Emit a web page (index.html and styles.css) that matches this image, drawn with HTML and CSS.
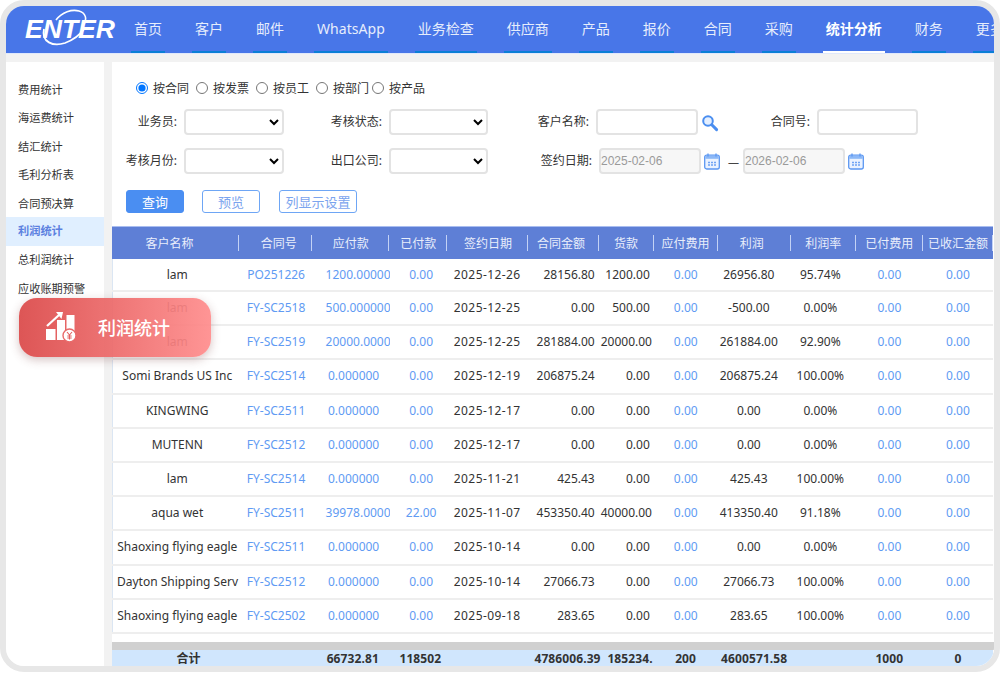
FILE: index.html
```html
<!DOCTYPE html>
<html lang="zh-CN">
<head>
    <meta charset="UTF-8">
    <title>利润统计</title>
    <link rel="stylesheet" href="styles.css">
</head>
<body>
<div class="frame">
    <div class="topbar">
        <svg class="logo" width="100" height="40" viewBox="0 0 100 40">
            <text x="0" y="29" class="logo-text" textLength="90" lengthAdjust="spacingAndGlyphs">ENTER</text>
            <path d="M31 11 C37 3 47 0 54 2 C61 4 62 10 59 15" fill="none" stroke="#fff" stroke-width="1.6"/>
            <path d="M19 20 C16 33 28 38 40 34 C48 31 55 26 60 19" fill="none" stroke="#fff" stroke-width="1.8"/>
        </svg>
        <nav class="tabs">
            <a>首页</a>
            <a>客户</a>
            <a>邮件</a>
            <a class="latin">WhatsApp</a>
            <a>业务检查</a>
            <a>供应商</a>
            <a>产品</a>
            <a>报价</a>
            <a>合同</a>
            <a>采购</a>
            <a class="active">统计分析</a>
            <a>财务</a>
            <a>更多</a>
        </nav>
    </div>

    <div class="content">
        <ul class="side">
            <li>费用统计</li>
            <li>海运费统计</li>
            <li>结汇统计</li>
            <li>毛利分析表</li>
            <li>合同预决算</li>
            <li class="active">利润统计</li>
            <li>总利润统计</li>
            <li>应收账期预警</li>
        </ul>

        <div class="main">
            <form class="filters">
                <div class="radios">
                    <label><input type="radio" name="by" checked>按合同</label>
                    <label><input type="radio" name="by">按发票</label>
                    <label><input type="radio" name="by">按员工</label>
                    <label><input type="radio" name="by">按部门</label>
                    <label class="tight"><input type="radio" name="by">按产品</label>
                </div>

                <div class="row">
                    <label class="lb-a">业务员:</label>
                    <select class="sel"></select>
                    <label class="lb-b">考核状态:</label>
                    <select class="sel sel-b"></select>
                    <label class="lb-c">客户名称:</label>
                    <input class="txt name" type="text">
                    <svg class="ico-search" width="18" height="18" viewBox="0 0 18 18">
                        <circle cx="7" cy="7" r="4.8" fill="#e4efff" stroke="#4a8ef0" stroke-width="2"/>
                        <path d="M10.8 10.8 L15.6 15.6" stroke="#4a8ef0" stroke-width="3" stroke-linecap="round"/>
                    </svg>
                    <label class="lb-d">合同号:</label>
                    <input class="txt" type="text">
                </div>

                <div class="row">
                    <label class="lb-a">考核月份:</label>
                    <select class="sel"></select>
                    <label class="lb-b">出口公司:</label>
                    <select class="sel sel-b"></select>
                    <label class="lb-e">签约日期:</label>
                    <input class="txt date" type="text" value="2025-02-06" disabled>
                    <svg class="ico-cal" width="16" height="17" viewBox="0 0 16 17">
                        <rect x="0.7" y="2.2" width="14.6" height="13.8" rx="2" fill="#eaf2ff" stroke="#5b97f2" stroke-width="1.3"/>
                        <rect x="1.3" y="2.8" width="13.4" height="3" fill="#8cb8f7"/>
                        <path d="M4 0.5 V3.5 M12 0.5 V3.5" stroke="#5b97f2" stroke-width="1.3"/>
                        <path d="M4 9.5 H12 M4 12 H12" stroke="#6fa3f4" stroke-width="1.4" stroke-dasharray="2 1"/>
                    </svg>
                    <span class="dash">—</span>
                    <input class="txt date" type="text" value="2026-02-06" disabled>
                    <svg class="ico-cal" width="16" height="17" viewBox="0 0 16 17">
                        <rect x="0.7" y="2.2" width="14.6" height="13.8" rx="2" fill="#eaf2ff" stroke="#5b97f2" stroke-width="1.3"/>
                        <rect x="1.3" y="2.8" width="13.4" height="3" fill="#8cb8f7"/>
                        <path d="M4 0.5 V3.5 M12 0.5 V3.5" stroke="#5b97f2" stroke-width="1.3"/>
                        <path d="M4 9.5 H12 M4 12 H12" stroke="#6fa3f4" stroke-width="1.4" stroke-dasharray="2 1"/>
                    </svg>
                </div>

                <div class="buttons">
                    <button type="button" class="btn primary">查询</button>
                    <button type="button" class="btn">预览</button>
                    <button type="button" class="btn wide">列显示设置</button>
                </div>
            </form>

            <table class="grid head">
                <colgroup><col class="c1"><col class="c2"><col class="c3"><col class="c4"><col class="c5"><col class="c6"><col class="c7"><col class="c8"><col class="c9"><col class="c10"><col class="c11"><col class="c12"></colgroup>
                <tr>
                    <th>客户名称</th><th>合同号</th><th>应付款</th><th>已付款</th><th>签约日期</th><th>合同金额</th><th>货款</th><th>应付费用</th><th>利润</th><th>利润率</th><th>已付费用</th><th>已收汇金额</th>
                </tr>
            </table>

            <table class="grid body">
                <colgroup><col class="c1"><col class="c2"><col class="c3"><col class="c4"><col class="c5"><col class="c6"><col class="c7"><col class="c8"><col class="c9"><col class="c10"><col class="c11"><col class="c12"></colgroup>
                <tr><td>lam</td><td class="link">PO251226</td><td class="link">1200.00000</td><td class="link">0.00</td><td>2025-12-26</td><td>28156.80</td><td>1200.00</td><td class="link">0.00</td><td>26956.80</td><td>95.74%</td><td class="link">0.00</td><td class="link">0.00</td></tr>
                <tr><td>lam</td><td class="link">FY-SC2518</td><td class="link">500.000000</td><td class="link">0.00</td><td>2025-12-25</td><td>0.00</td><td>500.00</td><td class="link">0.00</td><td>-500.00</td><td>0.00%</td><td class="link">0.00</td><td class="link">0.00</td></tr>
                <tr><td>lam</td><td class="link">FY-SC2519</td><td class="link">20000.0000</td><td class="link">0.00</td><td>2025-12-25</td><td>281884.00</td><td>20000.00</td><td class="link">0.00</td><td>261884.00</td><td>92.90%</td><td class="link">0.00</td><td class="link">0.00</td></tr>
                <tr><td>Somi Brands US Inc</td><td class="link">FY-SC2514</td><td class="link">0.000000</td><td class="link">0.00</td><td>2025-12-19</td><td>206875.24</td><td>0.00</td><td class="link">0.00</td><td>206875.24</td><td>100.00%</td><td class="link">0.00</td><td class="link">0.00</td></tr>
                <tr><td>KINGWING</td><td class="link">FY-SC2511</td><td class="link">0.000000</td><td class="link">0.00</td><td>2025-12-17</td><td>0.00</td><td>0.00</td><td class="link">0.00</td><td>0.00</td><td>0.00%</td><td class="link">0.00</td><td class="link">0.00</td></tr>
                <tr><td>MUTENN</td><td class="link">FY-SC2512</td><td class="link">0.000000</td><td class="link">0.00</td><td>2025-12-17</td><td>0.00</td><td>0.00</td><td class="link">0.00</td><td>0.00</td><td>0.00%</td><td class="link">0.00</td><td class="link">0.00</td></tr>
                <tr><td>lam</td><td class="link">FY-SC2514</td><td class="link">0.000000</td><td class="link">0.00</td><td>2025-11-21</td><td>425.43</td><td>0.00</td><td class="link">0.00</td><td>425.43</td><td>100.00%</td><td class="link">0.00</td><td class="link">0.00</td></tr>
                <tr><td>aqua wet</td><td class="link">FY-SC2511</td><td class="link">39978.0000</td><td class="link">22.00</td><td>2025-11-07</td><td>453350.40</td><td>40000.00</td><td class="link">0.00</td><td>413350.40</td><td>91.18%</td><td class="link">0.00</td><td class="link">0.00</td></tr>
                <tr><td>Shaoxing flying eagle</td><td class="link">FY-SC2511</td><td class="link">0.000000</td><td class="link">0.00</td><td>2025-10-14</td><td>0.00</td><td>0.00</td><td class="link">0.00</td><td>0.00</td><td>0.00%</td><td class="link">0.00</td><td class="link">0.00</td></tr>
                <tr><td>Dayton Shipping Serv</td><td class="link">FY-SC2512</td><td class="link">0.000000</td><td class="link">0.00</td><td>2025-10-14</td><td>27066.73</td><td>0.00</td><td class="link">0.00</td><td>27066.73</td><td>100.00%</td><td class="link">0.00</td><td class="link">0.00</td></tr>
                <tr><td>Shaoxing flying eagle</td><td class="link">FY-SC2502</td><td class="link">0.000000</td><td class="link">0.00</td><td>2025-09-18</td><td>283.65</td><td>0.00</td><td class="link">0.00</td><td>283.65</td><td>100.00%</td><td class="link">0.00</td><td class="link">0.00</td></tr>
            </table>

            <div class="hscroll"></div>

            <table class="grid total">
                <colgroup><col class="c1"><col class="c2"><col class="c3"><col class="c4"><col class="c5"><col class="c6"><col class="c7"><col class="c8"><col class="c9"><col class="c10"><col class="c11"><col class="c12"></colgroup>
                <tr><td>合计</td><td></td><td>66732.81</td><td>118502</td><td></td><td>4786006.39</td><td>185234.</td><td>200</td><td>4600571.58</td><td></td><td>1000</td><td>0</td></tr>
            </table>
        </div>
    </div>
</div>

<!-- 浮动标签 -->
<div class="badge">
    <svg width="32" height="32" viewBox="0 0 32 32">
        <rect x="1" y="17" width="9.5" height="11" fill="#fff"/>
        <rect x="12" y="8" width="8" height="20" fill="#fff"/>
        <rect x="21.5" y="3" width="8" height="17" fill="#fff"/>
        <path d="M2 14 L14 3" stroke="#fff" stroke-width="2.2" fill="none"/>
        <path d="M11 0 L18 0 L16.5 7 Z" fill="#fff"/>
        <circle cx="24.5" cy="23.5" r="6.5" fill="#fff" stroke="#e86a6a" stroke-width="1.4"/>
        <path d="M22 20 L24.5 23 L27 20 M24.5 23 V27.5 M22.3 24 H26.7 M22.3 26 H26.7" stroke="#e25f5f" stroke-width="1.1" fill="none"/>
    </svg>
    <span>利润统计</span>
</div>
</body>
</html>
```

FILE: styles.css
```css
* {
    box-sizing: border-box;
}
html, body {
    margin: 0;
    padding: 0;
    height: 100%;
    overflow: hidden;
    background-color: #ffffff;
}
body {
    font-family: "Noto Sans", "Noto Sans CJK SC", sans-serif;
    font-size: 12px;
    color: #333;
}
.frame {
    width: 1000px;
    height: 672px;
    border: 6px solid #e7e7e7;
    border-radius: 24px;
    overflow: hidden;
    display: flex;
    flex-direction: column;
    background-color: #f2f2f2;
}

/* 顶部导航 */
.topbar {
    height: 48px;
    flex: none;
    display: flex;
    background-color: #4876e8;
    border-bottom: 1px solid #dfe8fb;
    overflow: hidden;
}
.logo {
    flex: none;
    margin: 3px 0 0 19px;
}
.logo-text {
    font-family: "Liberation Sans", sans-serif;
    font-size: 25px;
    font-weight: bold;
    font-style: italic;
    fill: #fff;
}
.tabs {
    display: flex;
    gap: 27px;
    margin-left: 6px;
    flex: none;
}
.tabs a {
    height: 47px;
    padding: 0 3px;
    line-height: 46px;
    font-size: 14px;
    color: #e6edfc;
    border-bottom: 2px solid #0a7fd6;
}
.tabs a.latin {
    letter-spacing: 0.05px;
}
.tabs a.active {
    color: #fff;
    font-weight: bold;
    border-bottom-color: #fff;
}

.content {
    flex: 1;
    min-height: 0;
    display: flex;
    padding-top: 8px;
}

/* 左侧菜单 */
.side {
    width: 98px;
    flex: none;
    margin: 0;
    padding: 14px 0 0;
    list-style: none;
    background-color: #fff;
}
.side li {
    height: 28.4px;
    line-height: 28.4px;
    padding-left: 12px;
    font-size: 11.2px;
    color: #333;
    white-space: nowrap;
}
.side li.active {
    height: 29.4px;
    margin: -1px 0 0;
    padding-top: 0.5px;
    background-color: #e0efff;
    color: #5b80e0;
    font-weight: bold;
}

.main {
    flex: 1;
    min-width: 0;
    margin-left: 8px;
    background-color: #fff;
    overflow: hidden;
}

/* 筛选 */
.filters {
    height: 164px;
    padding-top: 19px;
}
.radios {
    display: flex;
    height: 14px;
    padding-left: 24px;
    align-items: center;
}
.radios label {
    width: 60px;
    flex: none;
    display: flex;
    align-items: center;
}
.radios label.tight {
    margin-left: -4px;
}
.radios input {
    width: 12px;
    height: 12px;
    margin: 0 5px 0 0;
}
.row {
    display: flex;
    align-items: center;
    height: 26px;
    margin-top: 13px;
}
.radios + .row {
    margin-top: 14px;
}
.row label {
    flex: none;
    margin-right: 7px;
    padding-bottom: 3px;
    text-align: right;
}
.lb-a {
    width: 65px;
}
.lb-b {
    width: 98px;
}
.lb-c {
    width: 101px;
}
.lb-d {
    width: 91px;
}
.lb-e {
    width: 104px;
}
.sel, .txt {
    height: 26px;
    width: 101px;
    flex: none;
    border: 2px solid #e3e3e3;
    border-radius: 4px;
    background-color: #fff;
}
.sel {
    width: 100px;
}
.sel-b {
    width: 99px;
}
.txt.name {
    width: 102px;
}
.txt.date {
    width: 102px;
    padding: 0;
    font-family: "Liberation Sans", sans-serif;
    font-size: 12px;
    color: #9a9a9a;
    background-color: #f7f7f7;
}
.ico-search {
    flex: none;
    margin: 2px 0 0 3px;
}
.ico-cal {
    flex: none;
    margin: 1px 0 0 3px;
}
.dash {
    width: 23px;
    flex: none;
    padding-left: 4px;
    text-align: center;
    font-size: 11px;
    color: #444;
}
.buttons {
    display: flex;
    gap: 18px;
    margin: 16px 0 0 14px;
}
.btn {
    width: 58px;
    height: 23px;
    padding: 0;
    font-family: inherit;
    font-size: 13px;
    color: #7ba4ee;
    background-color: #fff;
    border: 1.5px solid #6ea6f5;
    border-radius: 3px;
}
.btn.primary {
    color: #fff;
    background-color: #4a8ef2;
    border-color: #4a8ef2;
}
.btn.wide {
    width: 78px;
    margin-left: 1px;
}

/* 表格 */
.grid {
    width: 881px;
    table-layout: fixed;
    border-collapse: collapse;
    text-align: center;
}
.c1 { width: 127px; }
.c2 { width: 73px; }
.c3 { width: 77px; }
.c4 { width: 58px; }
.c5 { width: 81px; }
.c6 { width: 70px; }
.c7 { width: 55px; }
.c8 { width: 64px; }
.c9 { width: 73px; }
.c10 { width: 65px; }
.c11 { width: 67px; }
.c12 { width: 70px; }
.grid th, .grid td {
    padding: 0 2px;
    overflow: hidden;
    white-space: nowrap;
}
.head {
    height: 33px;
    background-color: #5e7fd6;
    border-top: 1px solid #a9bdf0;
}
.head th {
    position: relative;
    font-weight: normal;
    font-size: 12px;
    color: #e9eefb;
}
.head th:first-child {
    padding-right: 14px;
}
.head th:nth-child(2) {
    padding-left: 8px;
}
.head th:nth-child(6), .head th:nth-child(9) {
    padding-right: 7px;
}
.head th::after {
    content: "";
    position: absolute;
    right: 0;
    top: 8px;
    height: 16px;
    border-right: 1px solid #c3d2f5;
}
.body {
    border-left: 1px solid #dbe6f3;
}
.body td {
    height: 34.2px;
    padding-bottom: 1px;
    border-bottom: 2px solid #eeeeee;
}
.body tr:first-child td {
    height: 32px;
}
.body td:nth-child(1) {
    padding-left: 4px;
}
.body td:nth-child(3) {
    padding-left: 13px;
    padding-right: 8px;
}
.body td:nth-child(4) {
    padding-left: 7px;
}
.body td:nth-child(5) {
    padding: 0 3px 1px 1px;
    letter-spacing: 0.4px;
}
.body td:nth-child(6), .body td:nth-child(7) {
    padding-right: 4px;
    text-align: right;
}
.body td:nth-child(9) {
    padding-left: 0;
    padding-right: 11px;
}
.body td:nth-child(10) {
    padding-left: 0;
    padding-right: 6px;
}
.link {
    color: #5f9bf3;
}
.hscroll {
    height: 8px;
    margin-top: 8px;
    background-color: #d0d0d0;
}
.total {
    background-color: #d0e6fd;
    font-weight: bold;
    letter-spacing: 0.1px;
}
.total td {
    height: 17px;
    line-height: 17px;
    overflow: visible;
}
.total td:first-child {
    padding-left: 28px;
}
.total td:nth-child(3), .total td:nth-child(4), .total td:nth-child(6) {
    padding-left: 6px;
}
.total td:nth-child(7) {
    padding-left: 8px;
    padding-right: 0;
}

/* 浮动标签 */
.badge {
    position: absolute;
    left: 19px;
    top: 298px;
    width: 192px;
    height: 59px;
    padding-left: 26px;
    display: flex;
    align-items: center;
    gap: 21px;
    border-radius: 18px;
    background: linear-gradient(90deg, rgba(219, 75, 75, 0.94), rgba(255, 140, 140, 0.92));
    box-shadow: 0 3px 10px rgba(120, 60, 60, 0.3);
}
.badge span {
    padding-bottom: 2px;
    color: #fff;
    font-size: 18px;
    font-weight: 500;
}
```
